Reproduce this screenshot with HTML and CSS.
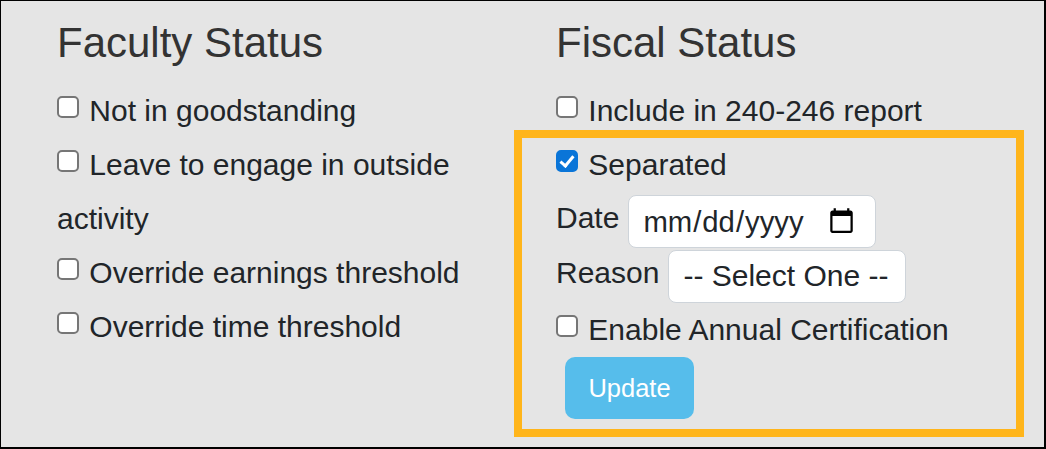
FILE: index.html
```html
<!DOCTYPE html>
<html lang="en">
<head>
<meta charset="UTF-8">
<meta name="viewport" content="width=device-width, initial-scale=1.0">
<title>Status</title>
<link rel="stylesheet" href="styles.css">
</head>
<body>
<div class="frame">
  <div class="col col-left">
    <h2>Faculty Status</h2>
    <div class="line"><label><input type="checkbox"> Not in goodstanding</label></div>
    <div class="line"><label><input type="checkbox"> Leave to engage in outside activity</label></div>
    <div class="line"><label><input type="checkbox"> Override earnings threshold</label></div>
    <div class="line"><label><input type="checkbox"> Override time threshold</label></div>
  </div>
  <div class="col col-right">
    <h2>Fiscal Status</h2>
    <div class="line"><label><input type="checkbox"> Include in 240-246 report</label></div>
    <div class="highlight">
      <div class="line"><label><input type="checkbox" checked> Separated</label></div>
      <div class="field">
        <label for="sepDate">Date</label>
        <input class="control date-input" id="sepDate" type="date">
      </div>
      <div class="field">
        <label for="sepReason">Reason</label>
        <select class="control reason-select" id="sepReason">
          <option>-- Select One --</option>
        </select>
      </div>
      <div class="line cert-line"><label><input type="checkbox"> Enable Annual Certification</label></div>
      <button class="update-button" type="button">Update</button>
    </div>
  </div>
</div>
</body>
</html>
```

FILE: styles.css
```css
/* styles.css */
html, body {
  margin: 0;
  padding: 0;
}

body {
  font-family: "Liberation Sans", Arial, sans-serif;
  font-size: 30px;
  color: #212529;
}

.frame {
  box-sizing: border-box;
  width: 1046px;
  height: 449px;
  background-color: #e5e5e5;
  border: solid #000;
  border-width: 1px 2px 2px 1px;
  display: flex;
  overflow: hidden;
}

.col-left {
  box-sizing: border-box;
  width: 499px;
  margin-left: 56px;
  padding-right: 80px;
  flex: none;
}

.col-right {
  flex: 1;
}

h2 {
  margin: 18px 0 17px;
  font-size: 42px;
  font-weight: 400;
  line-height: 48px;
  color: #333;
}

.line {
  line-height: 54px;
}

.cert-line {
  margin-top: 1px;
}

.line input[type="checkbox"] {
  appearance: none;
  -webkit-appearance: none;
  box-sizing: border-box;
  position: relative;
  width: 22px;
  height: 22px;
  margin: 0 2px 0 0;
  vertical-align: 3px;
  background-color: #fff;
  border: 2px solid #767676;
  border-radius: 5px;
}

.line input[type="checkbox"]:checked {
  background-color: #0a75d8;
  border-color: #0a75d8;
}

.line input[type="checkbox"]:checked::after {
  content: "";
  position: absolute;
  top: 1px;
  left: 5px;
  width: 5px;
  height: 11px;
  border: solid #fff;
  border-width: 0 3px 3px 0;
  transform: rotate(40deg);
}

.highlight {
  position: relative;
}

/* orange callout drawn over the form */
.highlight::before {
  content: "";
  position: absolute;
  top: -8px;
  left: -42px;
  width: 494px;
  height: 291px;
  border: 8px solid #ffb51b;
  pointer-events: none;
}

.field {
  display: flex;
  align-items: center;
  gap: 9px;
  height: 55px;
  position: relative;
  top: 2px;
}

.field label {
  position: relative;
  top: -4px;
}

.control {
  box-sizing: border-box;
  height: 53px;
  background-color: #fff;
  border: 1px solid #ced4da;
  border-radius: 8px;
  font-family: inherit;
  font-size: 30px;
  color: #212529;
}

.date-input {
  width: 248px;
  padding: 0 17px 0 13px;
  font-size: 29.3px;
}

.reason-select {
  width: 238px;
  padding: 0 14px 2px;
  appearance: none;
  -webkit-appearance: none;
}

.update-button {
  display: block;
  margin: 0 0 0 9px;
  width: 129px;
  height: 62px;
  background-color: #56bdeb;
  color: #fff;
  border: none;
  border-radius: 10px;
  font-family: inherit;
  font-size: 25.5px;
}
```
